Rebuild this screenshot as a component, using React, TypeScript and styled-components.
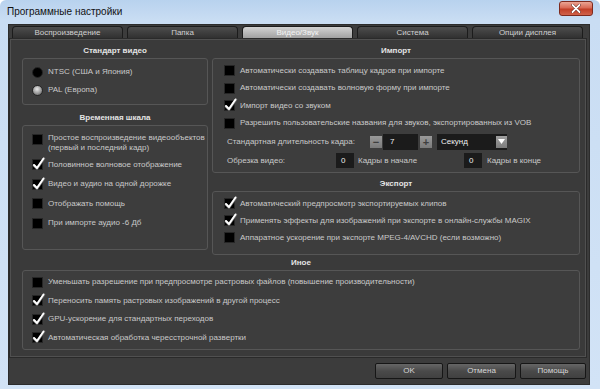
import React from 'react';
import styled, { createGlobalStyle } from 'styled-components';

const GlobalStyle = createGlobalStyle`
  html, body { margin: 0; padding: 0; background: #ffffff; }
  body { font-family: "Liberation Sans", Arial, sans-serif; }
  * { box-sizing: border-box; }
`;

const Window = styled.div`
  width: 600px;
  height: 389px;
  display: flex;
  flex-direction: column;
  background: linear-gradient(#b8d2ee 0px, #c9ddf3 20px, #d2e3f6 100%);
  border-radius: 6px 6px 0 0;
  overflow: hidden;
`;

const TitleBar = styled.div`
  height: 24px;
  flex: none;
  display: flex;
  align-items: flex-start;
  padding: 0 7px;
`;

const Title = styled.div`
  font-family: "Liberation Sans", Arial, sans-serif;
  font-size: 10px;
  line-height: 24px;
  color: #111111;
`;

const CloseButton = styled.div`
  margin-left: auto;
  margin-top: 1px;
  width: 34px;
  height: 15px;
  border: 1px solid #7e2a1e;
  border-radius: 3px;
  background: linear-gradient(#eaa594 0%, #d96a55 45%, #c13f27 55%, #d0624a 100%);
  display: flex;
  align-items: center;
  justify-content: center;
`;

const Client = styled.div`
  flex: 1;
  margin: 0 10px 4px 8px;
  border: 1px solid #2c2c2c;
  background: #3c3c3c;
  padding: 1px 3px 5px 1px;
  display: flex;
  flex-direction: column;
`;

const TabsRow = styled.div`
  display: grid;
  grid-template-columns: repeat(5, 1fr);
  column-gap: 4px;
  padding: 0 3px 0 2px;
  height: 13px;
`;

const Tab = styled.div<{ $active?: boolean }>`
  height: 13px;
  border: 1px solid #1c1c1c;
  border-bottom: none;
  border-radius: 4px 4px 0 0;
  background: ${(p) =>
    p.$active
      ? 'linear-gradient(#d2d2d2, #9c9c9c)'
      : 'linear-gradient(#4d4d4d, #2e2e2e)'};
  color: ${(p) => (p.$active ? '#f4f4f4' : '#cfcfcf')};
  font-size: 8px;
  line-height: 12px;
  text-align: center;
`;

const Panel = styled.div`
  border: 1px solid #505050;
  outline: 1px solid #2a2a2a;
  background: #3a3a3a;
  padding: 4px 5px 6px 11px;
  display: grid;
  grid-template-columns: 186px 1fr;
  column-gap: 4px;
`;

const Column = styled.div`
  display: flex;
  flex-direction: column;
`;

const FullRow = styled.div`
  grid-column: 1 / span 2;
  display: flex;
  flex-direction: column;
  margin-top: 1px;
`;

const SectionTitle = styled.div<{ $gap?: number }>`
  height: 14px;
  line-height: 14px;
  margin-top: ${(p) => p.$gap ?? 0}px;
  text-align: center;
  font-size: 8px;
  font-weight: bold;
  color: #e4e4e4;
`;

const GroupBox = styled.div<{ $pad: string; $grow?: boolean; $mb?: number }>`
  border: 1px solid #565656;
  border-radius: 3px;
  background: #3d3d3d;
  padding: ${(p) => p.$pad};
  flex: ${(p) => (p.$grow ? 1 : 'none')};
  margin-bottom: ${(p) => p.$mb ?? 0}px;
  display: flex;
  flex-direction: column;
`;

const OptionRow = styled.div<{ $h: number; $top?: boolean }>`
  height: ${(p) => p.$h}px;
  display: flex;
  align-items: ${(p) => (p.$top ? 'flex-start' : 'center')};
  gap: 5px;
  font-size: 8px;
  line-height: 10px;
  color: #c9c9c9;
  white-space: nowrap;
`;

const BoxMark = styled.span<{ $top?: boolean }>`
  position: relative;
  flex: none;
  width: 11px;
  height: 11px;
  margin-top: ${(p) => (p.$top ? 1 : 0)}px;
  background: #000;
  border: 1px solid #262626;
`;

const Tick = styled.svg`
  position: absolute;
  left: -1px;
  top: -3px;
  width: 14px;
  height: 14px;
  overflow: visible;
`;

const RadioMark = styled.span<{ $on?: boolean }>`
  flex: none;
  width: 11px;
  height: 11px;
  border-radius: 50%;
  border: 1px solid #262626;
  background: ${(p) =>
    p.$on
      ? 'radial-gradient(circle at 45% 35%, #e8e8e8 0%, #a8a8a8 45%, #555555 100%)'
      : '#000'};
`;

const FieldRow = styled.div<{ $h: number }>`
  height: ${(p) => p.$h}px;
  display: flex;
  align-items: center;
  padding-left: 3px;
  font-size: 8px;
  color: #c9c9c9;
  white-space: nowrap;
`;

const FieldLabel = styled.span<{ $w?: number }>`
  flex: none;
  width: ${(p) => (p.$w ? `${p.$w}px` : 'auto')};
`;

const StepButton = styled.span<{ $ml?: number }>`
  flex: none;
  width: 12px;
  height: 12px;
  margin-left: ${(p) => p.$ml ?? 0}px;
  background: linear-gradient(#9a9a9a, #7a7a7a);
  color: #3e3e3e;
  font-size: 11px;
  font-weight: bold;
  line-height: 12px;
  text-align: center;
`;

const NumBox = styled.span<{ $w: number; $ml?: number; $mr?: number; $h: number }>`
  flex: none;
  width: ${(p) => p.$w}px;
  height: ${(p) => p.$h}px;
  margin-left: ${(p) => p.$ml ?? 0}px;
  margin-right: ${(p) => p.$mr ?? 0}px;
  background: #1b1b1b;
  color: #f0f0f0;
  font-size: 8px;
  line-height: ${(p) => p.$h}px;
  padding-left: ${(p) => (p.$w > 25 ? 7 : 5)}px;
`;

const SelectBox = styled.span`
  flex: none;
  width: 70px;
  height: 16px;
  margin-left: 5px;
  background: #1b1b1b;
  color: #f0f0f0;
  font-size: 8px;
  display: flex;
  align-items: center;
  padding-left: 4px;
  justify-content: space-between;
`;

const SelectArrow = styled.span`
  width: 11px;
  height: 12px;
  background: linear-gradient(#a0a0a0, #7c7c7c);
  display: flex;
  align-items: center;
  justify-content: center;
`;

const ButtonRow = styled.div`
  display: flex;
  justify-content: flex-end;
  gap: 4px;
  margin-top: 6px;
`;

const DialogButton = styled.div<{ $w: number }>`
  width: ${(p) => p.$w}px;
  height: 16px;
  border: 1px solid #161616;
  border-radius: 2px;
  background: linear-gradient(#666666, #4a4a4a 50%, #404040);
  color: #d6d6d6;
  font-size: 8px;
  line-height: 14px;
  text-align: center;
`;

const CheckTick = () => (
  <Tick viewBox="0 0 14 14">
    <path d="M2 8.5 L5 11.5 L12 1.5" fill="none" stroke="#6a6a6a" strokeWidth="2.6" strokeLinecap="round" strokeLinejoin="round" />
    <path d="M2 8 L5 11 L11.5 1.5" fill="none" stroke="#ffffff" strokeWidth="1.9" strokeLinecap="round" strokeLinejoin="round" />
  </Tick>
);

type Opt = { text: React.ReactNode; on?: boolean };

const Check = ({ on, top }: { on?: boolean; top?: boolean }) => (
  <BoxMark $top={top}>{on && <CheckTick />}</BoxMark>
);

const tabs = ['Воспроизведение', 'Папка', 'Видео/Звук', 'Система', 'Опции дисплея'];

const timeline: Opt[] = [
  { text: 'Половинное волновое отображение', on: true },
  { text: 'Видео и аудио на одной дорожке', on: true },
  { text: 'Отображать помощь' },
  { text: 'При импорте аудио -6 Дб' },
];

const importOpts: Opt[] = [
  { text: 'Автоматически создавать таблицу кадров при импорте' },
  { text: 'Автоматически создавать волновую форму при импорте' },
  { text: 'Импорт видео со звуком', on: true },
  { text: 'Разрешить пользовательские названия для звуков, экспортированных из VOB' },
];

const exportOpts: Opt[] = [
  { text: 'Автоматический предпросмотр экспортируемых клипов', on: true },
  { text: 'Применять эффекты для изображений при экспорте в онлайн-службы MAGIX', on: true },
  { text: 'Аппаратное ускорение при экспорте MPEG-4/AVCHD (если возможно)' },
];

const otherOpts: Opt[] = [
  { text: 'Уменьшать разрешение при предпросмотре растровых файлов (повышение производительности)' },
  { text: 'Переносить память растровых изображений в другой процесс', on: true },
  { text: 'GPU-ускорение для стандартных переходов', on: true },
  { text: 'Автоматическая обработка чересстрочной развертки', on: true },
];

export default function App() {
  return (
    <>
      <GlobalStyle />
      <Window>
        <TitleBar>
          <Title>Программные настройки</Title>
          <CloseButton>
            <svg width="10" height="9" viewBox="0 0 10 9">
              <path d="M1.5 1 L8.5 8 M8.5 1 L1.5 8" stroke="#5a1a10" strokeWidth="2.8" strokeLinecap="round" />
              <path d="M1.5 1 L8.5 8 M8.5 1 L1.5 8" stroke="#ffffff" strokeWidth="1.8" strokeLinecap="round" />
            </svg>
          </CloseButton>
        </TitleBar>
        <Client>
          <TabsRow>
            {tabs.map((t) => (
              <Tab key={t} $active={t === 'Видео/Звук'}>
                {t}
              </Tab>
            ))}
          </TabsRow>
          <Panel>
            <Column>
              <SectionTitle>Стандарт видео</SectionTitle>
              <GroupBox $pad="4px 0 5px 9px">
                <OptionRow $h={18}>
                  <RadioMark />
                  NTSC (США и Япония)
                </OptionRow>
                <OptionRow $h={18}>
                  <RadioMark $on />
                  PAL (Европа)
                </OptionRow>
              </GroupBox>
              <SectionTitle $gap={6}>Временная шкала</SectionTitle>
              <GroupBox $pad="7px 0 0 9px" $grow $mb={5}>
                <OptionRow $h={22} $top>
                  <Check top />
                  <span>
                    Простое воспроизведение видеообъектов
                    <br />
                    (первый и последний кадр)
                  </span>
                </OptionRow>
                {timeline.map((o, i) => (
                  <OptionRow key={i} $h={19.5}>
                    <Check on={o.on} />
                    {o.text}
                  </OptionRow>
                ))}
              </GroupBox>
            </Column>
            <Column>
              <SectionTitle>Импорт</SectionTitle>
              <GroupBox $pad="3px 0 3px 11px">
                {importOpts.map((o, i) => (
                  <OptionRow key={i} $h={17.5}>
                    <Check on={o.on} />
                    {o.text}
                  </OptionRow>
                ))}
                <FieldRow $h={19}>
                  <FieldLabel $w={143}>Стандартная длительность кадра:</FieldLabel>
                  <StepButton>−</StepButton>
                  <NumBox $w={35} $h={16} $ml={1}>7</NumBox>
                  <StepButton $ml={2}>+</StepButton>
                  <SelectBox>
                    Секунд
                    <SelectArrow>
                      <svg width="7" height="5" viewBox="0 0 7 5">
                        <path d="M0 0 H7 L3.5 5 Z" fill="#ffffff" />
                      </svg>
                    </SelectArrow>
                  </SelectBox>
                </FieldRow>
                <FieldRow $h={18}>
                  <FieldLabel $w={109}>Обрезка видео:</FieldLabel>
                  <NumBox $w={18} $h={15} $mr={4}>0</NumBox>
                  <FieldLabel $w={106}>Кадры в начале</FieldLabel>
                  <NumBox $w={18} $h={15} $mr={5}>0</NumBox>
                  <FieldLabel>Кадры в конце</FieldLabel>
                </FieldRow>
              </GroupBox>
              <SectionTitle $gap={4}>Экспорт</SectionTitle>
              <GroupBox $pad="3px 0 8px 11px" $grow>
                {exportOpts.map((o, i) => (
                  <OptionRow key={i} $h={17}>
                    <Check on={o.on} />
                    {o.text}
                  </OptionRow>
                ))}
              </GroupBox>
            </Column>
            <FullRow>
              <SectionTitle>Иное</SectionTitle>
              <GroupBox $pad="2px 0 2px 9px">
                {otherOpts.map((o, i) => (
                  <OptionRow key={i} $h={18.5}>
                    <Check on={o.on} />
                    {o.text}
                  </OptionRow>
                ))}
              </GroupBox>
            </FullRow>
          </Panel>
          <ButtonRow>
            <DialogButton $w={68}>OK</DialogButton>
            <DialogButton $w={69}>Отмена</DialogButton>
            <DialogButton $w={66}>Помощь</DialogButton>
          </ButtonRow>
        </Client>
      </Window>
    </>
  );
}
